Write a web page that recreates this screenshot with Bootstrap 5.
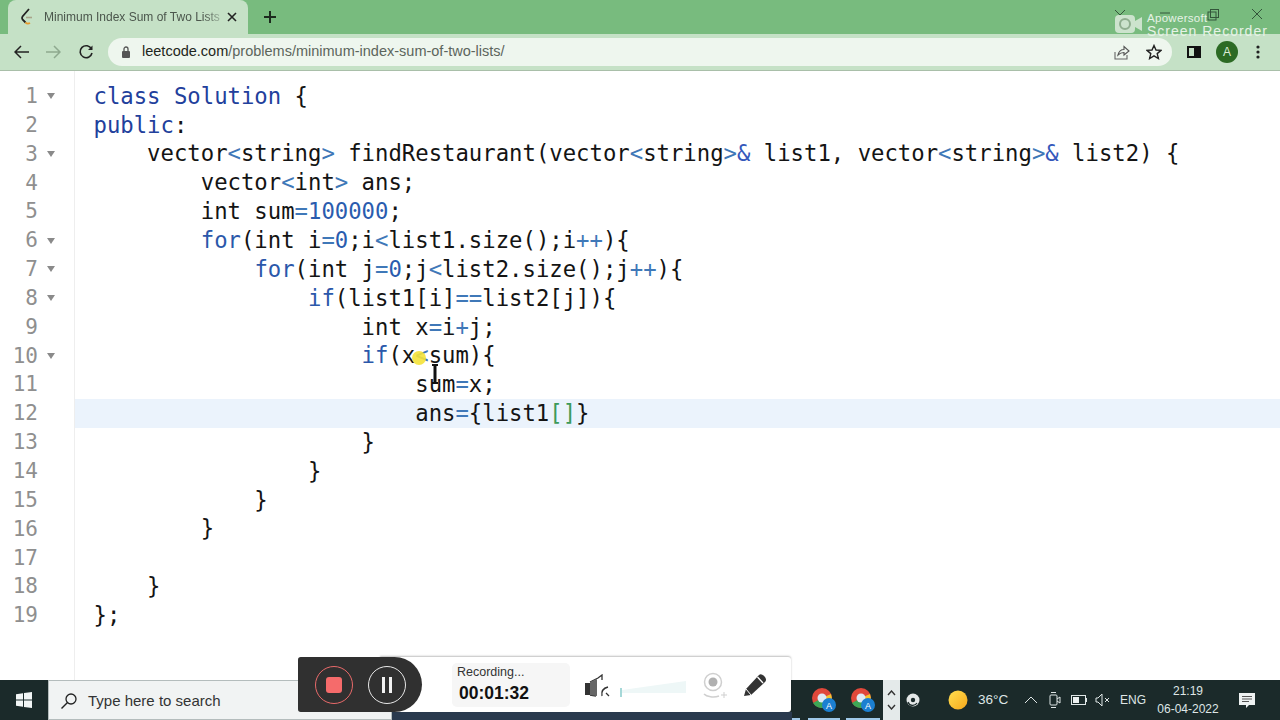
<!DOCTYPE html>
<html lang="en">
<head>
    <meta charset="UTF-8">
    <title>Minimum Index Sum of Two Lists</title>
    <link href="https://cdn.jsdelivr.net/npm/bootstrap@5.3.0/dist/css/bootstrap.min.css" rel="stylesheet">
    <style>
        html, body { height: 100%; overflow: hidden; }
        body { background: #fff; font-family: "Liberation Sans", Arial, sans-serif; }
        .screen { width: 1280px; height: 720px; position: relative; }

        /* chrome */
        .tab-strip { height: 34px; background: #78bb7e; padding-left: 8px; }
        .tab-active { width: 240px; height: 34px; background: #c5e1c6; border-radius: 8px 8px 0 0; padding-left: 12px; font-size: 12px; color: #4b564c; white-space: nowrap; }
        .tab-title { width: 178px; margin-left: 10px; margin-right: 5px; -webkit-mask-image: linear-gradient(to right, #000 90%, rgba(0,0,0,.25) 100%); mask-image: linear-gradient(to right, #000 90%, rgba(0,0,0,.25) 100%); }
        .new-tab { margin-left: 16px; }
        .tool-strip { height: 37px; background: #c5e1c6; border-bottom: 1px solid #a9bfa9; padding-left: 14px; }
        .nav-fwd { margin-left: 15px; }
        .nav-reload { margin-left: 17px; }
        .omni { width: 1064px; height: 28px; margin-left: 14px; background: #eef6ee; border-radius: 14px; padding: 0 10px 0 13px; font-size: 14.5px; color: #5c655c; }
        .omni-url { margin-left: 11px; }
        .omni-url b { font-weight: 400; color: #1e2620; }
        .omni-share { margin-left: auto; margin-right: 16px; }
        .side-panel { margin-left: 15px; margin-right: 15px; }
        .avatar { width: 22px; height: 22px; border-radius: 50%; background: #2c6a24; color: #dcecd8; font-size: 12px; }
        .menu-dots { margin-left: 18px; }

        /* editor */
        .editor { height: 609px; }
        .gutter { width: 75px; border-right: 1px solid #eeeeee; padding-top: 11px; }
        .gutter-row { height: 28.85px; color: #8f8f8f; font-family: "DejaVu Sans Mono", monospace; font-size: 21px; line-height: 28.85px; }
        .fold { width: 0; height: 0; margin-left: 9px; border-left: 4px solid transparent; border-right: 4px solid transparent; border-top: 6px solid #8a8a8a; }
        .num { width: 38px; text-align: right; }
        .code-pane { padding-top: 10.800px; }
        .code-row { height: 28.85px; padding-left: 18.500px; font-family: "DejaVu Sans Mono", "Liberation Mono", monospace; font-size: 22.28px; line-height: 28.85px; color: #141414; white-space: pre; }
        .code-row.is-current { background: #ebf3fc; }
        .kw { color: #22409c; }
        .ctl { color: #2b58aa; }
        .op { color: #3f78b8; }
        .amp { color: #3558bb; }
        .nm { color: #2a5cae; }
        .br { color: #3c9a5a; }

        /* overlays */
        .highlight-dot { position: absolute; left: 412px; top: 351px; width: 14px; height: 14px; border-radius: 50%; background: #f4e238; opacity: .9; }
        .ibeam { position: absolute; left: 430px; top: 364px; }
        .watermark { position: absolute; left: 1115px; top: 12px; color: #e6f2e6; }
        .wm-small { font-size: 11.5px; line-height: 12px; letter-spacing: .3px; }
        .wm-big { font-size: 14px; line-height: 14px; letter-spacing: 1px; }
        .win-btns { position: absolute; left: 1110px; top: 7px; }

        /* taskbar */
        .taskbar { height: 40px; background: #1b2a2a; color: #dfe6e6; position: relative; }
        .start-btn { width: 48px; }
        .search-box { width: 344px; background: #f1f3f3; border: 1px solid #b4bcbc; color: #333; font-size: 15px; padding-left: 11px; padding-top: 2px; gap: 10px; }
        .task-apps { width: 491px; position: relative; }
        .task-under { position: absolute; bottom: 0; height: 2px; background: #9fc8e8; }
        .under-a { left: 338px; width: 30px; }
        .under-b { left: 374px; width: 34px; }
        .under-c { left: 416px; width: 32px; }
        .under-d { left: 454px; width: 34px; }
        .chrome-ico { position: absolute; top: 687px; }
        .chrome-a { left: 811px; }
        .chrome-b { left: 850px; }
        .navy-strip { position: absolute; left: 392px; top: 712px; width: 400px; height: 8px; background: #2a3a4e; }
        .tray { font-size: 13.5px; flex-grow: 1; }
        .t-chev { width: 17px; height: 100%; background: #e4eaea; }
        .t-swirl { width: 26px; }
        .t-sun { width: 24px; margin-left: 20px; }
        .t-temp { width: 34px; margin-left: 8px; white-space: nowrap; }
        .t-up { width: 20px; margin-left: 9px; }
        .t-cam { width: 20px; margin-left: 4px; }
        .t-bat { width: 20px; margin-left: 4px; }
        .t-vol { width: 20px; margin-left: 3px; }
        .t-eng { width: 26px; margin-left: 8px; font-size: 12px; }
        .clock { width: 80px; margin-left: 2px; font-size: 12px; line-height: 18px; text-align: center; }
        .t-note { width: 38px; }

        /* recorder bar */
        .rec-light { position: absolute; left: 380px; top: 657px; width: 411px; height: 55px; background: #fff; border-radius: 0 3px 3px 0; box-shadow: 0 -1px 2px rgba(0,0,0,.25); }
        .rec-dark { position: absolute; left: 298px; top: 657px; width: 124px; height: 55px; background: #303030; border-radius: 3px 30px 30px 3px; }
        .rec-stop { position: absolute; left: 315px; top: 666px; width: 38px; height: 38px; border-radius: 50%; border: 1px solid #e96a6a; }
        .rec-pause { position: absolute; left: 368px; top: 666px; width: 38px; height: 38px; border-radius: 50%; border: 1px solid #e8e8e8; }
        .stop-sq { width: 16px; height: 16px; border-radius: 3px; background: #f56b6b; }
        .pause-bars { width: 10px; height: 16px; border-left: 3px solid #f2f2f2; border-right: 3px solid #f2f2f2; }
        .rec-time { position: absolute; left: 452px; top: 663px; width: 118px; height: 44px; background: #f6f6f6; border-radius: 5px; padding-left: 5px; }
        .rec-label { font-size: 12.5px; line-height: 18px; color: #333; }
        .rec-clock { font-size: 17.500px; line-height: 24px; font-weight: 700; color: #111; padding-left: 2px; }
        .rec-speaker { position: absolute; left: 584px; top: 674px; }
        .rec-level { position: absolute; left: 620px; top: 680px; }
        .rec-cam { position: absolute; left: 701px; top: 672px; }
        .rec-pen { position: absolute; left: 742px; top: 672px; }
    </style>
</head>
<body>
<div class="screen d-flex flex-column">

    <div class="tab-strip d-flex align-items-center">
        <div class="tab-active d-flex align-items-center">
            <svg width="14" height="18" viewBox="0 0 14 18" class="flex-shrink-0"><path d="M9 1 L2.500 8.500 Q1.500 10 2.500 11.500 L5.500 14.500" fill="none" stroke="#222" stroke-width="1.800"/><path d="M5.500 14.500 Q7.500 16.500 10 15" fill="none" stroke="#e59a2c" stroke-width="1.800"/><path d="M6 9.500 H12" stroke="#a9a48a" stroke-width="1.600"/></svg>
            <span class="tab-title">Minimum Index Sum of Two Lists</span>
            <svg width="10" height="10" viewBox="0 0 10 10"><path d="M1 1 L9 9 M9 1 L1 9" stroke="#222" stroke-width="1.600"/></svg>
        </div>
        <svg class="new-tab" width="12" height="12" viewBox="0 0 12 12"><path d="M6 0 V12 M0 6 H12" stroke="#1d2a1e" stroke-width="2"/></svg>
    </div>

    <div class="tool-strip d-flex align-items-center">
        <svg width="16" height="14" viewBox="0 0 16 14"><path d="M7 1 L1 7 L7 13 M1 7 H15" fill="none" stroke="#222" stroke-width="1.500"/></svg>
        <svg width="16" height="14" viewBox="0 0 16 14" class="nav-fwd"><path d="M9 1 L15 7 L9 13 M15 7 H1" fill="none" stroke="#8ea98f" stroke-width="1.500"/></svg>
        <svg width="16" height="16" viewBox="0 0 16 16" class="nav-reload"><path d="M13.500 5 A6 6 0 1 0 14 9" fill="none" stroke="#222" stroke-width="1.600"/><path d="M14.500 1.500 V6 H10 Z" fill="#222"/></svg>
        <div class="omni d-flex align-items-center flex-shrink-0">
            <svg width="10" height="12" viewBox="0 0 10 12"><rect x="1" y="5" width="8" height="7" rx="1" fill="#555"/><path d="M3 5 V3 A2 2 0 0 1 7 3 V5" fill="none" stroke="#555" stroke-width="1.300"/></svg>
            <span class="omni-url"><b>leetcode.com</b>/problems/minimum-index-sum-of-two-lists/</span>
            <svg width="16" height="16" viewBox="0 0 16 16" class="omni-share"><path d="M1 8 V15 H13 V11" fill="none" stroke="#666" stroke-width="1.100"/><path d="M4 11 C5 7 8 5.500 10 5.500 V2.500 L15 7 L10 11 V8.500 C8 8.500 6 9 4 11 Z" fill="none" stroke="#555" stroke-width="1.100"/></svg>
            <svg width="16" height="16" viewBox="0 0 16 16"><path d="M8 1.500 L10 6 L15 6.400 L11.200 9.600 L12.400 14.500 L8 11.900 L3.600 14.500 L4.800 9.600 L1 6.400 L6 6 Z" fill="none" stroke="#222" stroke-width="1.400"/></svg>
        </div>
        <svg width="14" height="12" viewBox="0 0 14 12" class="side-panel"><rect x="1" y="1" width="12" height="10" fill="none" stroke="#111" stroke-width="2"/><rect x="7" y="1" width="6" height="10" fill="#111"/></svg>
        <div class="avatar d-flex align-items-center justify-content-center">A</div>
        <svg width="4" height="14" viewBox="0 0 4 14" class="menu-dots"><circle cx="2" cy="2" r="1.600" fill="#222"/><circle cx="2" cy="7" r="1.600" fill="#222"/><circle cx="2" cy="12" r="1.600" fill="#222"/></svg>
    </div>

    <div class="editor d-flex">
        <div class="gutter flex-shrink-0" id="gutter"></div>
        <div class="code-pane flex-grow-1">
            <div class="code-row"><span class="kw">class</span> <span class="kw">Solution</span> {</div>
            <div class="code-row"><span class="kw">public</span>:</div>
            <div class="code-row">    vector<span class="op">&lt;</span>string<span class="op">&gt;</span> findRestaurant(vector<span class="op">&lt;</span>string<span class="op">&gt;</span><span class="amp">&amp;</span> list1, vector<span class="op">&lt;</span>string<span class="op">&gt;</span><span class="amp">&amp;</span> list2) {</div>
            <div class="code-row">        vector<span class="op">&lt;</span>int<span class="op">&gt;</span> ans;</div>
            <div class="code-row">        int sum<span class="op">=</span><span class="nm">100000</span>;</div>
            <div class="code-row">        <span class="ctl">for</span>(int i<span class="op">=</span><span class="nm">0</span>;i<span class="op">&lt;</span>list1.size();i<span class="op">++</span>){</div>
            <div class="code-row">            <span class="ctl">for</span>(int j<span class="op">=</span><span class="nm">0</span>;j<span class="op">&lt;</span>list2.size();j<span class="op">++</span>){</div>
            <div class="code-row">                <span class="ctl">if</span>(list1[i]<span class="op">==</span>list2[j]){</div>
            <div class="code-row">                    int x<span class="op">=</span>i<span class="op">+</span>j;</div>
            <div class="code-row">                    <span class="ctl">if</span>(x<span class="op">&lt;</span>sum){</div>
            <div class="code-row">                        sum<span class="op">=</span>x;</div>
            <div class="code-row is-current">                        ans<span class="op">=</span>{list1<span class="br">[]</span>}</div>
            <div class="code-row">                    }</div>
            <div class="code-row">                }</div>
            <div class="code-row">            }</div>
            <div class="code-row">        }</div>
            <div class="code-row"></div>
            <div class="code-row">    }</div>
            <div class="code-row">};</div>
        </div>
    </div>

    <div class="taskbar d-flex align-items-stretch">
        <div class="start-btn d-flex align-items-center justify-content-center">
            <svg width="16" height="16" viewBox="0 0 16 16"><path d="M0 2.300 L7 1.300 V7.500 H0 Z M8 1.100 L16 0 V7.500 H8 Z M0 8.500 H7 V14.700 L0 13.700 Z M8 8.500 H16 V16 L8 14.900 Z" fill="#f2f5f5"/></svg>
        </div>
        <div class="search-box d-flex align-items-center">
            <svg width="18" height="18" viewBox="0 0 18 18"><circle cx="11" cy="7" r="5" fill="none" stroke="#222" stroke-width="1.300"/><path d="M7.500 10.500 L1.500 16.500" stroke="#222" stroke-width="1.400"/></svg>
            <span>Type here to search</span>
        </div>
        <div class="task-apps">
            <div class="task-under under-a"></div>
            <div class="task-under under-b"></div>
            <div class="task-under under-c"></div>
            <div class="task-under under-d"></div>
        </div>
        <div class="tray d-flex align-items-center">
            <div class="t-chev d-flex flex-column align-items-center justify-content-center gap-2">
                <svg width="9" height="6" viewBox="0 0 9 6"><path d="M1 5 L4.500 1 L8 5" fill="none" stroke="#333" stroke-width="1.400"/></svg>
                <svg width="9" height="6" viewBox="0 0 9 6"><path d="M1 1 L4.500 5 L8 1" fill="none" stroke="#333" stroke-width="1.400"/></svg>
            </div>
            <div class="t-swirl d-flex justify-content-center">
                <svg width="14" height="14" viewBox="0 0 14 14"><circle cx="7" cy="7" r="6.500" fill="#e4e8e8"/><circle cx="7" cy="7" r="2.200" fill="#1b2a2a"/><path d="M2 9 A5 5 0 0 0 11 10" fill="none" stroke="#1b2a2a" stroke-width="1.200"/></svg>
            </div>
            <div class="t-sun d-flex justify-content-center">
                <svg width="20" height="20" viewBox="0 0 20 20"><defs><linearGradient id="sun" x1="0" y1="0" x2="1" y2="1"><stop offset="0" stop-color="#ffdf50"/><stop offset="1" stop-color="#f7a81b"/></linearGradient></defs><circle cx="10" cy="10" r="9.500" fill="url(#sun)"/></svg>
            </div>
            <span class="t-temp">36°C</span>
            <div class="t-up d-flex justify-content-center"><svg width="14" height="8" viewBox="0 0 14 8"><path d="M1 7 L7 1 L13 7" fill="none" stroke="#dfe6e6" stroke-width="1"/></svg></div>
            <div class="t-cam d-flex justify-content-center"><svg width="12" height="18" viewBox="0 0 12 18"><rect x="1" y="4" width="7" height="10" rx="1" fill="none" stroke="#dfe6e6"/><path d="M8 8 L11 6 V12 L8 10 M2 1.500 H7 M2 16.500 H7" fill="none" stroke="#dfe6e6"/></svg></div>
            <div class="t-bat d-flex justify-content-center"><svg width="16" height="10" viewBox="0 0 16 10"><rect x=".5" y=".5" width="14" height="9" fill="none" stroke="#dfe6e6"/><rect x="2" y="2" width="6" height="6" fill="#eef2f2"/><path d="M15.500 3 V7" stroke="#dfe6e6"/></svg></div>
            <div class="t-vol d-flex justify-content-center"><svg width="15" height="14" viewBox="0 0 15 14"><path d="M1 5 H3 L7 1 V13 L3 9 H1 Z" fill="none" stroke="#dfe6e6"/><path d="M10 5 L14 9 M14 5 L10 9" stroke="#dfe6e6"/></svg></div>
            <span class="t-eng">ENG</span>
            <div class="clock">21:19<br>06-04-2022</div>
            <div class="t-note d-flex justify-content-center">
                <svg width="18" height="17" viewBox="0 0 18 17"><path d="M1 1 H17 V13 H11 L8 16 V13 H1 Z" fill="#eef2f2"/><path d="M4 4.500 H14 M4 7 H14 M4 9.500 H11" stroke="#555"/></svg>
            </div>
        </div>
    </div>

    <!-- overlays -->
    <div class="watermark d-flex align-items-center">
        <svg width="28" height="24" viewBox="0 0 28 24" class="me-1"><rect x="0" y="2" width="20" height="18" rx="4" fill="#dbeadb" opacity=".85"/><circle cx="10" cy="11" r="5" fill="none" stroke="#8fae8f" stroke-width="2"/><path d="M20 8 L27 4 V18 L20 14 Z" fill="#dbeadb" opacity=".85"/></svg>
        <div>
            <div class="wm-small">Apowersoft</div>
            <div class="wm-big">Screen Recorder</div>
        </div>
    </div>
    <svg class="win-btns" width="160" height="16" viewBox="0 0 160 16"><path d="M5 3 L10 8 L15 3" fill="none" stroke="#33553a"/><path d="M50 6 H60" stroke="#33553a"/><rect x="98" y="5" width="8" height="8" fill="none" stroke="#33553a"/><rect x="100.500" y="2.500" width="8" height="8" fill="none" stroke="#33553a"/><path d="M142 2 L152 12 M152 2 L142 12" stroke="#33553a"/></svg>

    <div class="highlight-dot"></div>
    <svg class="ibeam" width="10" height="20" viewBox="0 0 10 20"><path d="M2 1 H8 M5 1 V19 M2 19 H8" stroke="#111" stroke-width="2"/><path d="M5 1 V19" stroke="#111" stroke-width="3"/></svg>

    <svg class="chrome-ico chrome-a" width="26" height="26" viewBox="0 0 26 26"><circle cx="11" cy="11" r="10" fill="#e0483b"/><path d="M11 11 L2 16 A10 10 0 0 0 15 20 Z" fill="#3ea655"/><path d="M11 11 L20 7 A10 10 0 0 1 15 20 Z" fill="#f4c430"/><circle cx="11" cy="11" r="4.500" fill="#dfeaf5"/><circle cx="18" cy="18" r="7" fill="#1b7fd1"/><text x="18" y="21.500" font-size="9" text-anchor="middle" fill="#fff" font-family="Liberation Sans">A</text></svg>
    <svg class="chrome-ico chrome-b" width="26" height="26" viewBox="0 0 26 26"><circle cx="11" cy="11" r="10" fill="#e0483b"/><path d="M11 11 L2 16 A10 10 0 0 0 15 20 Z" fill="#3ea655"/><path d="M11 11 L20 7 A10 10 0 0 1 15 20 Z" fill="#f4c430"/><circle cx="11" cy="11" r="4.500" fill="#dfeaf5"/><circle cx="18" cy="18" r="7" fill="#1b7fd1"/><text x="18" y="21.500" font-size="9" text-anchor="middle" fill="#fff" font-family="Liberation Sans">A</text></svg>

    <div class="navy-strip"></div>
    <div class="rec-light"></div>
    <div class="rec-dark"></div>
    <div class="rec-stop d-flex align-items-center justify-content-center"><div class="stop-sq"></div></div>
    <div class="rec-pause d-flex align-items-center justify-content-center"><div class="pause-bars"></div></div>
    <div class="rec-time">
        <div class="rec-label">Recording...</div>
        <div class="rec-clock">00:01:32</div>
    </div>
    <svg class="rec-speaker" width="28" height="24" viewBox="0 0 28 24"><rect x="1" y="9" width="5" height="12" fill="#333"/><path d="M6 8 L14 4 L18 1 V6 M6 21 L12 22" fill="none" stroke="#333" stroke-width="1.300"/><path d="M6 8 L13 5 L13 22 L6 21 Z" fill="#666"/><path d="M18 22 C17 17 20 14 24 13 M22 19 L25 22" fill="none" stroke="#333" stroke-width="1.300"/></svg>
    <svg class="rec-level" width="68" height="18" viewBox="0 0 68 18"><path d="M2 10 L66 1 V13 H2 Z" fill="#eef7f7"/><rect x="0" y="8" width="2" height="9" fill="#a5d8d8"/></svg>
    <svg class="rec-cam" width="26" height="28" viewBox="0 0 26 28"><circle cx="12" cy="10" r="8.500" fill="none" stroke="#cfcfcf" stroke-width="1.500"/><circle cx="12" cy="10" r="4.500" fill="#b0b0b0"/><path d="M3 22 A10 5 0 0 0 18 24" fill="none" stroke="#cfcfcf" stroke-width="1.500"/><path d="M20 23 H26 M23 20 V26" stroke="#cfcfcf"/></svg>
    <svg class="rec-pen" width="26" height="26" viewBox="0 0 26 26"><path d="M2 24 L4 17 L17 3 Q19 1 22 4 L23 5 Q25 8 23 10 L9 23 Z" fill="#333"/><path d="M15.500 5 L21 11" stroke="#fff" stroke-width="1.300"/><path d="M4 17 L9 23" stroke="#fff" stroke-width="1"/></svg>
</div>

<script>
    // line numbers, fold arrows on the block openers
    const foldLines = [1, 3, 6, 7, 8, 10];
    const gutter = document.getElementById('gutter');
    for (let n = 1; n <= 19; n++) {
        const row = document.createElement('div');
        row.className = 'gutter-row d-flex align-items-center';
        row.innerHTML = '<span class="num">' + n + '</span>' + (foldLines.includes(n) ? '<span class="fold"></span>' : '');
        gutter.appendChild(row);
    }
</script>
<script src="https://cdn.jsdelivr.net/npm/bootstrap@5.3.0/dist/js/bootstrap.bundle.min.js"></script>
</body>
</html>
